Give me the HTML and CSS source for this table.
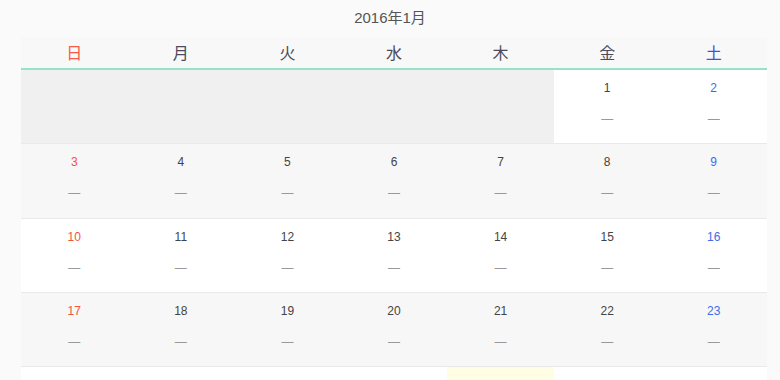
FILE: index.html
```html
<!DOCTYPE html>
<html lang="ja">
<head>
<meta charset="utf-8">
<title>2016年1月</title>
<link rel="stylesheet" href="styles.css">
</head>
<body>
<div class="title">2016年1月</div>
<div class="cal">
  <div class="head">
    <div class="sun">日</div><div>月</div><div>火</div><div>水</div><div>木</div><div>金</div><div class="sat">土</div>
  </div>
  <div class="week">
    <div class="cell empty"></div><div class="cell empty"></div><div class="cell empty"></div><div class="cell empty"></div><div class="cell empty"></div>
    <div class="cell"><span class="num">1</span><span class="dash">—</span></div>
    <div class="cell"><span class="num sat">2</span><span class="dash">—</span></div>
  </div>
  <div class="week alt">
    <div class="cell"><span class="num sun">3</span><span class="dash">—</span></div>
    <div class="cell"><span class="num">4</span><span class="dash">—</span></div>
    <div class="cell"><span class="num">5</span><span class="dash">—</span></div>
    <div class="cell"><span class="num">6</span><span class="dash">—</span></div>
    <div class="cell"><span class="num">7</span><span class="dash">—</span></div>
    <div class="cell"><span class="num">8</span><span class="dash">—</span></div>
    <div class="cell"><span class="num sat">9</span><span class="dash">—</span></div>
  </div>
  <div class="week">
    <div class="cell"><span class="num sun">10</span><span class="dash">—</span></div>
    <div class="cell"><span class="num">11</span><span class="dash">—</span></div>
    <div class="cell"><span class="num">12</span><span class="dash">—</span></div>
    <div class="cell"><span class="num">13</span><span class="dash">—</span></div>
    <div class="cell"><span class="num">14</span><span class="dash">—</span></div>
    <div class="cell"><span class="num">15</span><span class="dash">—</span></div>
    <div class="cell"><span class="num sat">16</span><span class="dash">—</span></div>
  </div>
  <div class="week alt">
    <div class="cell"><span class="num sun">17</span><span class="dash">—</span></div>
    <div class="cell"><span class="num">18</span><span class="dash">—</span></div>
    <div class="cell"><span class="num">19</span><span class="dash">—</span></div>
    <div class="cell"><span class="num">20</span><span class="dash">—</span></div>
    <div class="cell"><span class="num">21</span><span class="dash">—</span></div>
    <div class="cell"><span class="num">22</span><span class="dash">—</span></div>
    <div class="cell"><span class="num sat">23</span><span class="dash">—</span></div>
  </div>
  <div class="week">
    <div class="cell"><span class="num sun">24</span><span class="dash">—</span></div>
    <div class="cell"><span class="num">25</span><span class="dash">—</span></div>
    <div class="cell"><span class="num">26</span><span class="dash">—</span></div>
    <div class="cell"><span class="num">27</span><span class="dash">—</span></div>
    <div class="cell today"><span class="num">28</span><span class="dash">—</span></div>
    <div class="cell"><span class="num">29</span><span class="dash">—</span></div>
    <div class="cell"><span class="num sat">30</span><span class="dash">—</span></div>
  </div>
</div>
</body>
</html>
```
FILE: styles.css
```css
html, body {
  margin: 0;
  padding: 0;
  background: #fafafa;
  font-family: "Liberation Sans", "Noto Sans CJK JP", sans-serif;
  color: #444;
}
.title {
  height: 37px;
  line-height: 35px;
  text-align: center;
  font-size: 15px;
  color: #555;
}
.cal {
  margin: 0 13px 0 21px;
}
.head {
  display: grid;
  grid-template-columns: repeat(7, 1fr);
  height: 31px;
  background: #f8f8f8;
  border-bottom: 2px solid #97e2cb;
  font-family: "Noto Sans CJK JP", sans-serif;
  font-size: 16px;
  line-height: 31px;
  text-align: center;
  color: #4a4a5a;
}
.week {
  display: grid;
  grid-template-columns: repeat(7, 1fr);
  height: 73.34px;
  background: #fff;
  border-bottom: 1px solid #e9e9e9;
}
.week.alt {
  background: #f7f7f7;
}
.cell {
  display: flex;
  flex-direction: column;
  align-items: center;
  padding-top: 11px;
}
.cell.empty {
  background: #f0f0f0;
}
.cell.today {
  background: #fffde3;
}
.num {
  font-size: 12px;
  line-height: 14px;
  color: #444;
}
.dash {
  margin-top: 17px;
  font-size: 12px;
  line-height: 14px;
  color: #999;
}
.sun {
  color: #f5523f;
}
.sat {
  color: #3d6cf0;
}
.head .sun { color: #f55a4a; }
.head .sat { color: #4451d8; }
```
